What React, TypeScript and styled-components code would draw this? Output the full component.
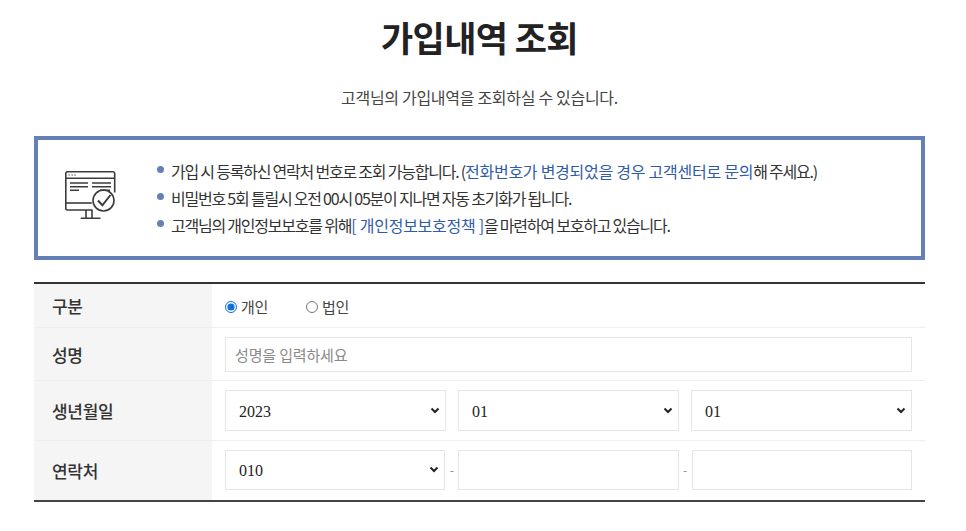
import React from "react";
import styled, { createGlobalStyle } from "styled-components";

const Global = createGlobalStyle`
  html, body { margin: 0; padding: 0; background: #fff; }
  body { font-family: "Noto Sans CJK KR", "Noto Sans", sans-serif; color: #333; overflow: hidden; }
`;
const Page = styled.div`
  width: 966px; height: 531px; box-sizing: border-box; padding: 0 41px 0 34px;
  display: flex; flex-direction: column; overflow: hidden;
`;
const Title = styled.h1`
  margin: 12px 0 0; height: 50px; text-align: center; font-size: 35px; line-height: 50px;
  font-weight: 700; color: #222; letter-spacing: -0.6px;
`;
const Subtitle = styled.p`
  margin: 23px 0 0; height: 24px; line-height: 24px; text-align: center; font-size: 16px; color: #444; letter-spacing: -0.3px;
`;
const Notice = styled.section`
  margin-top: 26.5px; height: 124.5px; box-sizing: border-box; border: 4px solid #6480b6;
  display: flex; align-items: center; padding-left: 27px;
`;
const IconWrap = styled.div`
  width: 52px; height: 50px; margin-right: 40px; flex: none; margin-top: -3px;
`;
const NoticeList = styled.ul`
  margin: 0; padding: 0; list-style: none; display: flex; flex-direction: column; margin-top: 1px;
`;
const NoticeItem = styled.li`
  height: 27px; line-height: 27px; font-size: 16px; letter-spacing: -1.22px; color: #333;
  display: flex; align-items: center; white-space: pre;
  &::before { content: ""; width: 7px; height: 7px; border-radius: 50%; background: #6480b6; margin-right: 7px; flex: none; margin-top: -3px; }
`;
const Accent = styled.span`
  color: #2f5ca8; letter-spacing: -0.25px;
`;
const Table = styled.div`
  margin-top: 22px; border-top: 2px solid #333; border-bottom: 2px solid #444;
`;
const Row = styled.div<{ $h: number; $last?: boolean }>`
  display: flex; height: ${(p) => p.$h}px; box-sizing: border-box;
  border-bottom: ${(p) => (p.$last ? "none" : "1px solid #efefef")};
`;
const Label = styled.div`
  width: 178px; flex: none; background: #f5f5f5; box-sizing: border-box; padding-left: 18px;
  display: flex; align-items: center; font-size: 17px; font-weight: 500; color: #333; letter-spacing: -0.3px;
`;
const Cell = styled.div<{ $pb?: number }>`
  flex: 1; display: flex; align-items: center; padding: 0 13px ${(p) => p.$pb ?? 0}px; min-width: 0;
`;
const RadioLabel = styled.label`
  display: flex; align-items: center; font-size: 15px; color: #444; margin-right: 38px; letter-spacing: -0.3px;
  padding-top: 2px;
`;
const Radio = styled.input`
  width: 12px; height: 12px; margin: 0 4px 0 0; accent-color: #0f6fdc;
`;
const TextInput = styled.input`
  flex: 1 1 200px; min-width: 0; width: 100%; box-sizing: border-box; height: 35px; border: 1px solid #e6e6e6; background: #fff;
  padding: 0 9px; font-family: "Noto Sans CJK KR", sans-serif; font-size: 15px; letter-spacing: -0.15px; outline: none;
  &::placeholder { color: #8a8a8a; opacity: 1; }
`;
const PhoneInput = styled(TextInput)`
  height: 40px;
`;
const chevron = `url("data:image/svg+xml,%3Csvg xmlns='http://www.w3.org/2000/svg' width='10' height='7' viewBox='0 0 10 7'%3E%3Cpath d='M1.5 1.5L5 5l3.5-3.5' fill='none' stroke='%23222' stroke-width='2'/%3E%3C/svg%3E")`;
const Select = styled.select<{ $h: number }>`
  flex: 1 1 200px; min-width: 0; box-sizing: border-box; height: ${(p) => p.$h}px; border: 1px solid #e6e6e6; border-radius: 0;
  appearance: none; background: #fff ${chevron} no-repeat right 5px center / 10px 7px;
  padding: 1px 13px 0; font-family: "Liberation Serif", "Noto Serif", serif; font-size: 16px; color: #222; outline: none;
`;
const Trio = styled.div<{ $gap: number }>`
  flex: 1; display: flex; align-items: center; gap: ${(p) => p.$gap}px;
`;
const Dash = styled.span`
  width: 13px; flex: none; text-align: center; font-size: 12px; color: #888;
`;

const MonitorIcon = () => (
  <svg width="52" height="50" viewBox="0 0 52 50" fill="none" stroke="#3c3c3c" strokeWidth="1.6">
    <path d="M27.5 39H2.5a1.7 1.7 0 0 1-1.7-1.7V2.5A1.7 1.7 0 0 1 2.5.8h45.5a1.7 1.7 0 0 1 1.7 1.7v19" />
    <path d="M.8 7.2h49" />
    <path d="M3.5 4h1.3M6.5 4h1.3M9.5 4h1.3" strokeWidth="1.1" />
    <path d="M5 12h18M5 15.7h18M5 19.2h9M27 12h19M27 15.7h19M35 19.2h10" strokeWidth="1.4" />
    <path d="M.8 32h26" />
    <path d="M21 39v8M27 39v8M15.7 47.2H35.5" />
    <circle cx="38.5" cy="29.5" r="10.5" />
    <path d="M33 29.5l4.4 4.8L45.5 24" strokeWidth="2" />
  </svg>
);

export default function App() {
  const none = <option value="01">01</option>;
  return (
    <Page>
      <Global />
      <Title>가입내역 조회</Title>
      <Subtitle>고객님의 가입내역을 조회하실 수 있습니다.</Subtitle>
      <Notice>
        <IconWrap><MonitorIcon /></IconWrap>
        <NoticeList>
          <NoticeItem>가입 시 등록하신 연락처 번호로 조회 가능합니다. (<Accent>전화번호가 변경되었을 경우 고객센터로 문의</Accent>해 주세요.)</NoticeItem>
          <NoticeItem>비밀번호 5회 틀릴시 오전 00시 05분이 지나면 자동 초기화가 됩니다.</NoticeItem>
          <NoticeItem>고객님의 개인정보보호를 위해<Accent>[ 개인정보보호정책 ]</Accent>을 마련하여 보호하고 있습니다.</NoticeItem>
        </NoticeList>
      </Notice>
      <Table>
        <Row $h={44}>
          <Label>구분</Label>
          <Cell>
            <RadioLabel><Radio type="radio" name="kind" defaultChecked />개인</RadioLabel>
            <RadioLabel><Radio type="radio" name="kind" />법인</RadioLabel>
          </Cell>
        </Row>
        <Row $h={53}>
          <Label>성명</Label>
          <Cell><TextInput placeholder="성명을 입력하세요" /></Cell>
        </Row>
        <Row $h={60}>
          <Label>생년월일</Label>
          <Cell>
            <Trio $gap={12}>
              <Select $h={41} defaultValue="2023"><option>2023</option></Select>
              <Select $h={41} defaultValue="01">{none}</Select>
              <Select $h={41} defaultValue="01">{none}</Select>
            </Trio>
          </Cell>
        </Row>
        <Row $h={59} $last>
          <Label>연락처</Label>
          <Cell $pb={2}>
            <Trio $gap={0}>
              <Select $h={40} defaultValue="010"><option>010</option></Select>
              <Dash>-</Dash>
              <PhoneInput />
              <Dash>-</Dash>
              <PhoneInput />
            </Trio>
          </Cell>
        </Row>
      </Table>
    </Page>
  );
}
